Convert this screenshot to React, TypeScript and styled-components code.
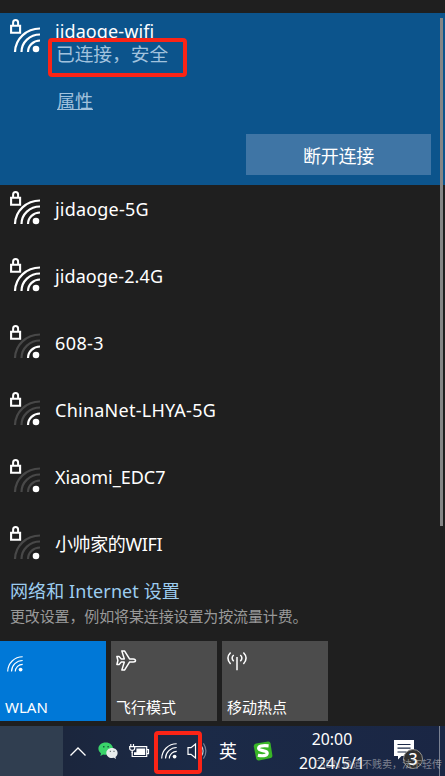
import React from "react";
import styled, { createGlobalStyle, css } from "styled-components";

const sans = `"Noto Sans", "Noto Sans CJK SC", sans-serif`;

const GlobalStyle = createGlobalStyle`
  *, *::before, *::after { box-sizing: border-box; }
  body { margin: 0; background: #1f1f1f; font-family: ${sans}; overflow: hidden; }
  button { font: inherit; border: 0; padding: 0; color: inherit; }
`;

const Screen = styled.main`
  display: flex;
  flex-direction: column;
  width: 445px;
  height: 776px;
  background: #1f1f1f;
  color: #fff;
  position: relative;
  overflow: hidden;
`;

const NetworkList = styled.section`
  height: 577px;
  padding-top: 13px;
  overflow: hidden;
`;

const ScrollThumb = styled.div`
  position: absolute;
  top: 18px;
  left: 440px;
  width: 3px;
  height: 508px;
  background: #858585;
`;

const Connected = styled.article`
  display: flex;
  height: 172px;
  background: #0c548c;
  padding: 6px 14px 10px 10px;
`;

const ConnectedBody = styled.div`
  display: flex;
  flex-direction: column;
  flex: 1;
  margin-left: 14px;
`;

const Label = styled.span<{ $size: number; $track?: number; $line?: number }>`
  display: block;
  font-size: ${(p) => p.$size}px;
  line-height: ${(p) => p.$line ?? 24}px;
  letter-spacing: ${(p) => p.$track ?? 0}px;
  white-space: nowrap;
`;

const StatusFrame = styled.div`
  width: 139px;
  height: 39px;
  margin: -5px 0 0 -7px;
  padding: 0 0 0 4px;
  border: 4px solid #fb2416;
  border-radius: 4px;
  background: #0c548c;
  color: #a1c2dd;
  position: relative;
`;

const Properties = styled.a`
  width: 36px;
  margin: 12px 0 0 2px;
  color: #a1c2dd;
  font-size: 18px;
  line-height: 24px;
  text-decoration: underline;
  text-decoration-thickness: 1px;
  text-underline-offset: 1px;
`;

const DisconnectButton = styled.button`
  align-self: flex-end;
  width: 185px;
  height: 41px;
  margin-top: auto;
  background: #3f75a5;
  font-size: 18px;
  letter-spacing: -0.3px;
`;

const NetworkRow = styled.article`
  display: flex;
  height: 67px;
  padding: 6px 0 0 10px;
`;

const RowName = styled.div`
  margin: 6px 0 0 14px;
`;

const Footer = styled.section`
  height: 64px;
  padding: 1px 0 0 10px;
`;

const SettingsLink = styled.div`
  color: #9ccdf0;
`;

const Hint = styled.div`
  color: #999;
`;

const Tiles = styled.section`
  display: flex;
  gap: 5px;
  height: 85px;
`;

const Tile = styled.button<{ $active?: boolean }>`
  display: flex;
  flex-direction: column;
  justify-content: space-between;
  align-items: flex-start;
  width: 106px;
  height: 80px;
  padding: 9px 5px 2px;
  background: ${(p) => (p.$active ? "#0078d7" : "#4c4c4c")};
`;

const TileIcon = styled.div<{ $top?: number; $left?: number }>`
  margin: ${(p) => p.$top ?? 0}px 0 0 ${(p) => p.$left ?? 0}px;
`;

const Taskbar = styled.footer`
  display: flex;
  height: 50px;
  background: linear-gradient(90deg, #1b2438, #1b2a47 45%, #1a2644);
`;

const TaskSlot = styled.div`
  width: 63px;
  background: #303e50;
`;

const Tray = styled.div`
  display: flex;
  align-items: center;
  width: 211px;
  position: relative;
`;

const TrayItem = styled.div<{ $width: number }>`
  display: flex;
  flex: none;
  justify-content: center;
  width: ${(p) => p.$width}px;
  font-size: 18px;
  line-height: 24px;
`;

const TrayFrame = styled.div`
  position: absolute;
  left: 91px;
  top: 5px;
  width: 48px;
  height: 43px;
  border: 4px solid #fb2416;
  border-radius: 4px;
`;

const Clock = styled.div`
  display: flex;
  flex-direction: column;
  align-items: center;
  width: 116px;
  padding-top: 1px;
`;

const ActionCenter = styled.div`
  width: 55px;
  padding: 14px 0 0 4px;
  position: relative;
`;

const DesktopEdge = styled.div`
  position: absolute;
  left: 49px;
  top: 0;
  width: 1px;
  height: 50px;
  background: #7b8292;
`;

const Watermark = styled.div`
  position: absolute;
  right: 3px;
  top: 756px;
  font-size: 10px;
  line-height: 16px;
  color: rgba(210, 210, 210, 0.55);
  white-space: nowrap;
`;

const iconBlock = css`
  display: block;
  flex: none;
  overflow: visible;
`;

const Svg = styled.svg`
  ${iconBlock}
`;

function SecureWifi({ level }: { level: number }) {
  const shade = (ring: number) => (level >= ring ? "#fff" : "#484848");
  return (
    <Svg width="31" height="34" viewBox="0 0 31 34" fill="none" strokeWidth="2.2">
      <path d="M5 33A25 24 0 0 1 30 9.5" stroke={shade(3)} />
      <path d="M11.5 33A18.5 17.5 0 0 1 30 15.5" stroke={shade(2)} />
      <path d="M18 33A12 11.5 0 0 1 30 21.5" stroke={shade(1)} />
      <circle cx="26" cy="30" r="3.3" fill="#fff" />
      <path d="M1.1 6.7h9v7h-9z" stroke="#fff" strokeWidth="2.1" />
      <path d="M3.1 6.8V3.7Q3.1 1.1 5.6 1.1T8.1 3.7V6.8" stroke="#fff" strokeWidth="2" />
    </Svg>
  );
}

function SmallWifi({ size }: { size: number }) {
  return (
    <Svg width={size} height={size} viewBox="0 0 16 16" fill="none" stroke="#fff" strokeWidth="1.15">
      <path d="M.7 15.5A15 15 0 0 1 15.7.7M4.5 15.5A11.2 11.2 0 0 1 15.7 4.5M8.3 15.5A7.4 7.4 0 0 1 15.7 8.3" />
      <circle cx="13.6" cy="13.6" r="1.9" fill="#fff" stroke="none" />
    </Svg>
  );
}

function Airplane() {
  return (
    <Svg width="20" height="21" viewBox="0 0 20 21" fill="none" stroke="#fff" strokeWidth="1.5" strokeLinejoin="round">
      <path d="M.9 6.5h2.2l2.2 2.4h3L5.8.9h2.7l5 8h3.7q2.3.2 2.3 1.6t-2.3 1.6h-3.7l-5 8H5.8l2.5-8h-3l-2.2 2.4H.9l1-4z" />
    </Svg>
  );
}

function Hotspot() {
  return (
    <Svg width="20" height="20" viewBox="0 0 20 20" fill="none" stroke="#fff" strokeWidth="1.5">
      <path d="M10 6v13.3" />
      <path d="M6.7 4q-3.2 3 0 6.3M13.3 4q3.2 3 0 6.3M3.6 1.5q-5.4 5.6 0 11.4M16.4 1.5q5.4 5.6 0 11.4" />
    </Svg>
  );
}

function WeChat() {
  return (
    <Svg width="20" height="18" viewBox="0 0 20 18">
      <path d="M7.7.5C3.6.5.4 3.2.4 6.6c0 2 1 3.6 2.6 4.8l-.7 2.5 2.8-1.5c4.8 1.2 9.9-1.3 9.9-5.8 0-3.4-3.2-6.1-7.3-6.1z" fill="#3ad46a" />
      <path d="M14 5.9c-3.3 0-5.7 2.3-5.7 5s2.4 5.2 5.7 5.2l1.8-.3 2.2 1.3-.5-2.1c1.3-.9 2.1-2.4 2.1-4.1 0-2.7-2.3-5-5.6-5z" fill="#e8ecec" />
      <path d="M5 4.1h1.5v1.5H5zM9.4 4.1h1.5v1.5H9.4z" fill="#17613d" />
      <path d="M11.8 8.7H13V10h-1.2zM15.4 8.7h1.2V10h-1.2z" fill="#6f7a7a" />
    </Svg>
  );
}

function Battery() {
  return (
    <Svg width="20" height="14" viewBox="0 0 20 14" fill="none" stroke="#fff" strokeWidth="1.2">
      <path d="M6 2.7h11.7v9.8H3.2V8" />
      <path d="M18 5.7h1.5v3.9H18" />
      <path d="M7.4 4.4h8.8v6.5H5V8.3h2.4z" fill="#fff" stroke="none" />
      <path d="M1.8 0v2.6M4.5 0v2.6M.7 2.7h5v1.5Q5.6 6.4 3.2 6.4T.7 4.2zM3.2 6v3" />
    </Svg>
  );
}

function Speaker() {
  return (
    <Svg width="20" height="18" viewBox="0 0 20 18" fill="none" stroke="#fff" strokeWidth="1.2">
      <path d="M1 5.7h3L8.5 2v14L4 12.3H1z" />
      <path d="M11.5 6q2 3 0 6" />
      <path d="M14.2 3.5q3.8 5.5 0 11" opacity=".75" />
      <path d="M16.4 1.3q5 7.7 0 15.4" opacity=".4" />
    </Svg>
  );
}

function Sogou() {
  return (
    <Svg width="20" height="20" viewBox="0 0 20 20">
      <path d="M3.2 2.4 15 .6q2-.2 2.5 1.6l1.9 12.4q.2 2-1.6 2.5L6 19.4q-2.3.3-2.8-1.8L.8 5.4Q.5 3 3.2 2.4z" fill="#39b527" />
      <path d="M15.6 4.9Q5.8 4 5.6 7.3c0 3.1 8.8 1.4 8.6 4.8-.2 3-5.3 3-9.3 2.1" fill="none" stroke="#fff" strokeWidth="3.2" />
    </Svg>
  );
}

const Chevron = () => (
  <Svg width="16" height="9" viewBox="0 0 16 9" fill="none" stroke="#fff" strokeWidth="1.3">
    <path d="m.5 8.5 7.5-7.5 7.5 7.5" />
  </Svg>
);

const Badge = styled.span`
  position: absolute;
  left: 13px;
  top: 23px;
  width: 20px;
  height: 20px;
  border: 1px solid #92918d;
  border-radius: 50%;
  background: #303030;
  font-size: 16px;
  line-height: 18px;
  text-align: center;
  font-weight: 500;
`;

const networks = [
  { name: "jidaoge-5G", level: 3, track: 0.2 },
  { name: "jidaoge-2.4G", level: 3, track: 0.1 },
  { name: "608-3", level: 1, track: 0.4 },
  { name: "ChinaNet-LHYA-5G", level: 1, track: 0.25 },
  { name: "Xiaomi_EDC7", level: 0, track: 0 },
  { name: "小帅家的WIFI", level: 0, track: -0.4 },
];

export default function App() {
  return (
    <>
      <GlobalStyle />
      <Screen>
        <NetworkList>
          <Connected>
            <SecureWifi level={3} />
            <ConnectedBody>
              <Label $size={18} $track={0.1}>jidaoge-wifi</Label>
              <StatusFrame>
                <Label $size={18.7}>已连接，安全</Label>
              </StatusFrame>
              <Properties>属性</Properties>
              <DisconnectButton>断开连接</DisconnectButton>
            </ConnectedBody>
          </Connected>
          {networks.map((n) => (
            <NetworkRow key={n.name}>
              <SecureWifi level={n.level} />
              <RowName>
                <Label $size={18} $track={n.track}>{n.name}</Label>
              </RowName>
            </NetworkRow>
          ))}
        </NetworkList>
        <Footer>
          <SettingsLink>
            <Label $size={18} $line={26} $track={0.1}>网络和 Internet 设置</Label>
          </SettingsLink>
          <Hint>
            <Label $size={15} $track={-0.13}>更改设置，例如将某连接设置为按流量计费。</Label>
          </Hint>
        </Footer>
        <Tiles>
          <Tile $active>
            <TileIcon $top={6} $left={2}>
              <SmallWifi size={16} />
            </TileIcon>
            <Label $size={15}>WLAN</Label>
          </Tile>
          <Tile>
            <TileIcon>
              <Airplane />
            </TileIcon>
            <Label $size={15}>飞行模式</Label>
          </Tile>
          <Tile>
            <TileIcon $top={1}>
              <Hotspot />
            </TileIcon>
            <Label $size={15}>移动热点</Label>
          </Tile>
        </Tiles>
        <Taskbar>
          <TaskSlot />
          <Tray>
            <TrayItem $width={30}><Chevron /></TrayItem>
            <TrayItem $width={30}><WeChat /></TrayItem>
            <TrayItem $width={31}><Battery /></TrayItem>
            <TrayItem $width={30}><SmallWifi size={16} /></TrayItem>
            <TrayItem $width={26}><Speaker /></TrayItem>
            <TrayItem $width={36}>英</TrayItem>
            <TrayItem $width={34}><Sogou /></TrayItem>
            <TrayFrame />
          </Tray>
          <Clock>
            <Label $size={15.8}>20:00</Label>
            <Label $size={15.8}>2024/5/1</Label>
          </Clock>
          <ActionCenter>
            <Svg width="20" height="20" viewBox="0 0 20 20">
              <path d="M0 0h20v16H7.5L4 19.5V16H0z" fill="#fff" />
              <path d="M3.5 4.5h13M3.5 8.2h13M3.5 12h9" stroke="#1b2a47" strokeWidth="1.2" />
            </Svg>
            <Badge>3</Badge>
            <DesktopEdge />
          </ActionCenter>
        </Taskbar>
        <ScrollThumb />
        <Watermark>CSDN @道不贱卖，法不轻传</Watermark>
      </Screen>
    </>
  );
}
